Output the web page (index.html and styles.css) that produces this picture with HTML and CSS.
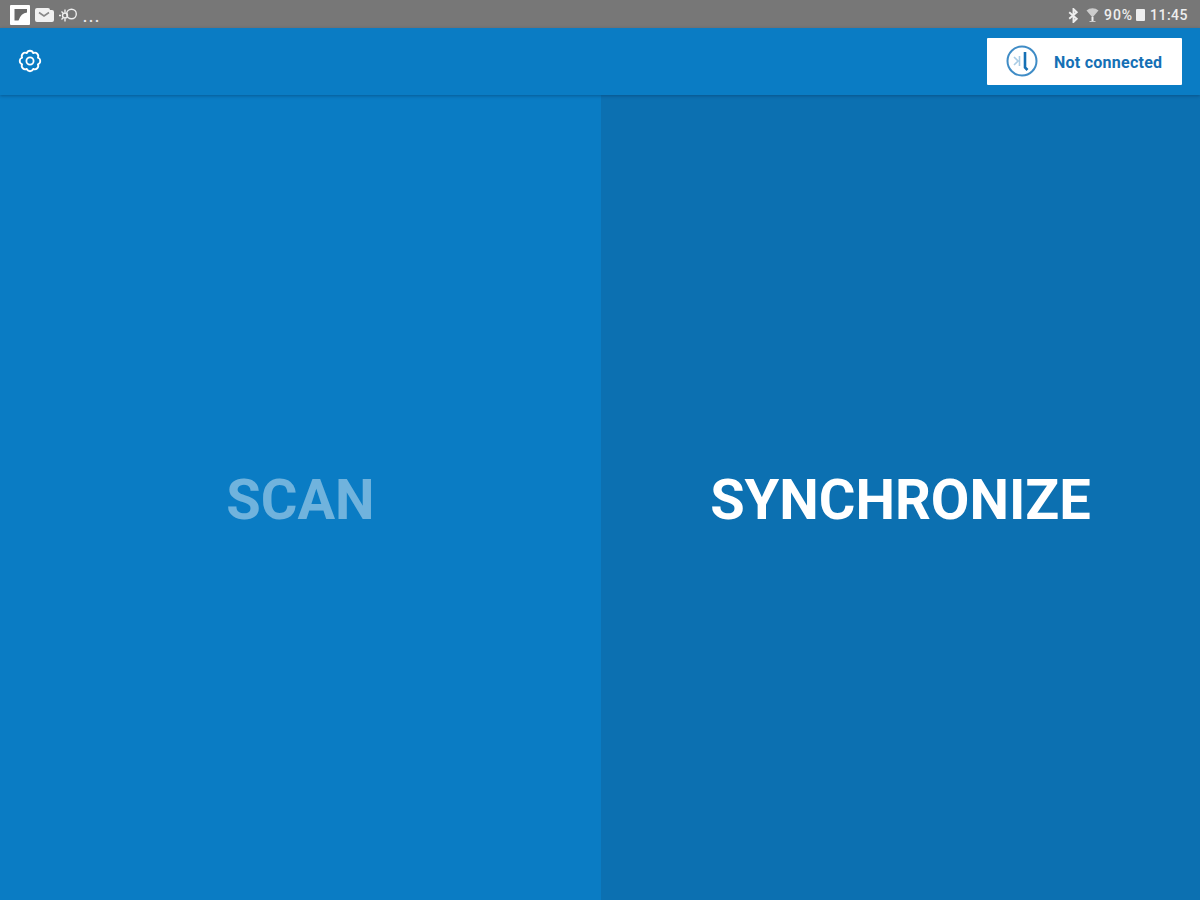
FILE: index.html
```html
<!DOCTYPE html>
<html lang="en">
<head>
<meta charset="utf-8">
<title>Scan or synchronize</title>
<link rel="stylesheet" href="styles.css">
</head>
<body>
<div class="app">
  <div class="statusbar">
    <div class="status-left">
      <svg class="ic-flip" width="20" height="20" viewBox="0 0 20 20"><rect width="20" height="20" rx="1" fill="#fff"/><path d="M4.500 4H17V7.500Q11 8 8.500 15.500H4.500z" fill="#6a6a6a"/></svg>
      <svg class="ic-mail" width="19" height="16" viewBox="0 0 19 16"><path d="M2 1h11a2 2 0 0 1 2 2h2a2 2 0 0 1 2 2v8a2 2 0 0 1-2 2H2a2 2 0 0 1-2-2V3a2 2 0 0 1 2-2z" fill="#f1f1f1"/><path d="M4 5.500l5 3.500 5-3.500" fill="none" stroke="#888" stroke-width="1.600"/></svg>
      <svg class="ic-cloud" width="19" height="16" viewBox="0 0 19 16" fill="none" stroke="#eee" stroke-width="1.400"><circle cx="12.500" cy="7" r="4.800"/><circle cx="6" cy="8.500" r="2.500"/><path d="M0 8.500h2M6 2.500v3M2.500 4.500L4 6M2.500 12.500L4 11M6 11.500v3"/></svg>
      <span class="dots">...</span>
    </div>
    <div class="status-right">
      <svg width="11" height="15" viewBox="0 0 10 14" fill="none" stroke="#eee" stroke-width="1.800"><path d="M1 4l7 6-3 3V1l3 3-7 6"/></svg>
      <svg class="ic-signal" width="15" height="14" viewBox="0 0 14 14"><path d="M1 2.500a9 9 0 0 1 12 0L7 9.500z" fill="#ccc"/><path d="M6 9h2v4H6z" fill="#eee"/><path d="M4 13h6v1H4z" fill="#ccc"/></svg>
      <span class="pct">90%</span>
      <span class="battery"></span>
      <span class="clock">11:45</span>
    </div>
  </div>
  <header class="toolbar">
    <svg class="gear" width="24" height="24" viewBox="0 0 24 24" fill="none" stroke="#fff" stroke-width="1.800" stroke-linejoin="round"><path d="M15.250 4.150A3.400 3.400 0 0 1 19.850 8.750A3.400 3.400 0 0 1 19.850 15.250A3.400 3.400 0 0 1 15.250 19.850A3.400 3.400 0 0 1 8.750 19.850A3.400 3.400 0 0 1 4.150 15.250A3.400 3.400 0 0 1 4.150 8.750A3.400 3.400 0 0 1 8.750 4.150A3.400 3.400 0 0 1 15.250 4.150z"/><circle cx="12" cy="12" r="3.600"/></svg>
    <div class="conn">
      <svg class="conn-ic" width="32" height="32" viewBox="0 0 32 32" fill="none"><circle cx="16" cy="16" r="14.500" stroke="#3f8cc6" stroke-width="2"/><path d="M19 7v15.500l2.500 2.500" stroke="#1570b5" stroke-width="2.600"/><path d="M8 12l4 4-4 4M13.500 11v10" stroke="#a9cce5" stroke-width="1.600"/></svg>
      <span class="conn-label">Not connected</span>
    </div>
  </header>
  <main class="panels">
    <div class="panel panel-scan"><span class="label label-dim">SCAN</span></div>
    <div class="panel panel-sync"><span class="label">SYNCHRONIZE</span></div>
  </main>
</div>
</body>
</html>
```
FILE: styles.css
```css
* { box-sizing: border-box; }
html, body { margin: 0; height: 100%; }
body { font-family: Roboto, "Liberation Sans", sans-serif; background: #0a7cc4; overflow: hidden; }
.app { width: 1200px; height: 900px; display: flex; flex-direction: column; }
.statusbar { height: 28px; background: #777777; display: flex; justify-content: space-between; align-items: center; padding: 2px 12px 0 10px; color: #eee; flex: none; }
.status-left, .status-right { display: flex; align-items: center; }
.status-left { gap: 5px; }
.dots { font-size: 14px; line-height: 14px; margin: 3px 0 0 0; font-weight: 700; letter-spacing: 2px; }
.status-right { font-size: 14px; font-weight: 500; }
.status-right > svg:first-child { margin-right: -1px; }
.ic-signal { margin-left: 7px; }
.pct { margin-left: 4px; letter-spacing: .9px; }
.battery { width: 9px; height: 12px; background: #eee; margin-left: 3px; border-radius: 1px; }
.clock { margin-left: 5px; letter-spacing: .5px; }
.toolbar { height: 67px; background: #0a7cc4; display: flex; justify-content: space-between; align-items: center; padding: 0 18px; position: relative; z-index: 1; box-shadow: 0 1px 3px rgba(0,40,80,.4); flex: none; }
.gear { margin-bottom: 2px; }
.conn { width: 195px; height: 47px; background: #fff; display: flex; align-items: center; padding-left: 19px; gap: 16px; margin-bottom: 1px; border-radius: 1px; }
.conn-label { font-size: 16px; font-weight: 700; color: #1570b5; letter-spacing: .25px; padding-top: 2px; }
.panels { flex: 1; display: grid; grid-template-columns: 601px 599px; }
.panel { display: flex; align-items: center; justify-content: center; padding-top: 4px; }
.panel-scan { background: #0a7cc4; }
.panel-sync { background: #0c70b1; }
.label { font-size: 56px; font-weight: 700; color: #fff; }
.label-dim { color: rgba(255,255,255,.42); }
```
